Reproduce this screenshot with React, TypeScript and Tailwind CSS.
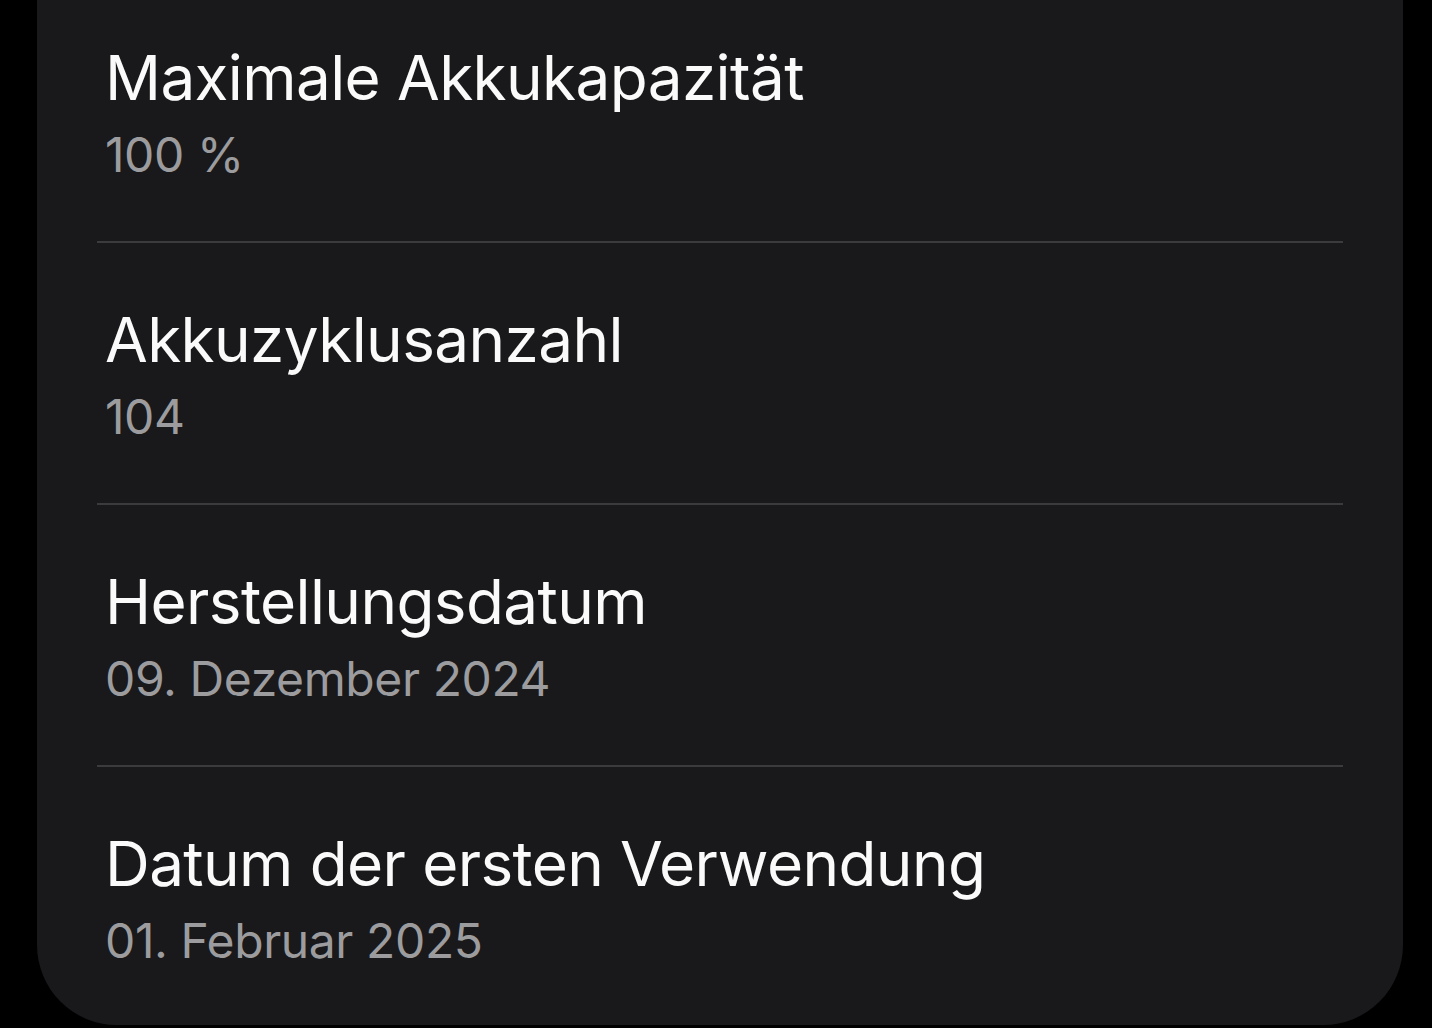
import React from "react"

type Item = {
  title: string
  value: string
}

const items: Array<Item> = [
  { title: "Maximale Akkukapazität", value: "100 %" },
  { title: "Akkuzyklusanzahl", value: "104" },
  { title: "Herstellungsdatum", value: "09. Dezember 2024" },
  { title: "Datum der ersten Verwendung", value: "01. Februar 2025" },
]

function Row({ item, first, last }: { item: Item; first: boolean; last: boolean }) {
  return (
    <div className={`${first ? "pt-[42px]" : "pt-[61px]"} ${last ? "pb-[56px]" : "pb-[58px]"} pl-[8px]`}>
      <p className="text-[62px] leading-[72px] tracking-[-0.6px] text-[#fafafa]">{item.title}</p>
      <p className="mt-[13px] text-[48px] leading-[56px] tracking-[-0.4px] text-[#9c9c9f]">{item.value}</p>
    </div>
  )
}

export default function App() {
  return (
    <div className="h-[1028px] w-full overflow-hidden bg-black pl-[37px] pr-[29px]" style={{ fontFamily: "Inter, 'Noto Sans', sans-serif" }}>
      <div className="rounded-b-[80px] bg-[#19191b] px-[60px]">
        {items.map((item, i) => (
          <div key={item.title}>
            {i > 0 && <div className="h-[2px] bg-[#3b3b3d]" />}
            <Row item={item} first={i === 0} last={i === items.length - 1} />
          </div>
        ))}
      </div>
    </div>
  )
}
